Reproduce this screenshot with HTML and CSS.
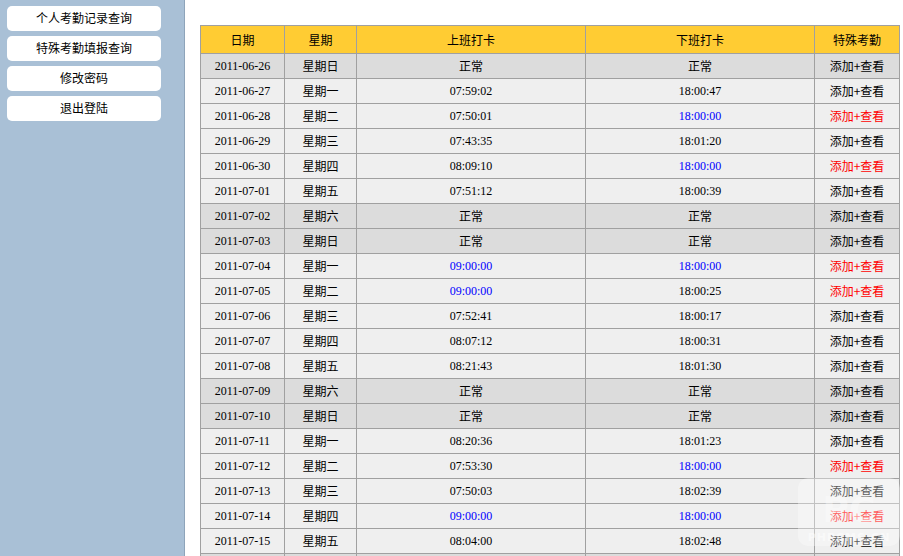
FILE: index.html
```html
<!DOCTYPE html>
<html lang="zh-CN">
<head>
<meta charset="utf-8">
<title>考勤记录</title>
<link rel="stylesheet" href="styles.css">
</head>
<body>
<div class="page">
  <aside class="sidebar">
    <a class="nav-btn" href="#">个人考勤记录查询</a>
    <a class="nav-btn" href="#">特殊考勤填报查询</a>
    <a class="nav-btn" href="#">修改密码</a>
    <a class="nav-btn" href="#">退出登陆</a>
  </aside>
  <main class="main">
    <table class="att">
      <colgroup>
        <col class="c-date"><col class="c-week"><col class="c-in"><col class="c-out"><col class="c-sp">
      </colgroup>
      <thead>
        <tr><th>日期</th><th>星期</th><th>上班打卡</th><th>下班打卡</th><th>特殊考勤</th></tr>
      </thead>
      <tbody>
        <tr class="off"><td>2011-06-26</td><td>星期日</td><td>正常</td><td>正常</td><td><a class="sp">添加+查看</a></td></tr>
        <tr><td>2011-06-27</td><td>星期一</td><td>07:59:02</td><td>18:00:47</td><td><a class="sp">添加+查看</a></td></tr>
        <tr><td>2011-06-28</td><td>星期二</td><td>07:50:01</td><td class="blue">18:00:00</td><td><a class="sp red">添加+查看</a></td></tr>
        <tr><td>2011-06-29</td><td>星期三</td><td>07:43:35</td><td>18:01:20</td><td><a class="sp">添加+查看</a></td></tr>
        <tr><td>2011-06-30</td><td>星期四</td><td>08:09:10</td><td class="blue">18:00:00</td><td><a class="sp red">添加+查看</a></td></tr>
        <tr><td>2011-07-01</td><td>星期五</td><td>07:51:12</td><td>18:00:39</td><td><a class="sp">添加+查看</a></td></tr>
        <tr class="off"><td>2011-07-02</td><td>星期六</td><td>正常</td><td>正常</td><td><a class="sp">添加+查看</a></td></tr>
        <tr class="off"><td>2011-07-03</td><td>星期日</td><td>正常</td><td>正常</td><td><a class="sp">添加+查看</a></td></tr>
        <tr><td>2011-07-04</td><td>星期一</td><td class="blue">09:00:00</td><td class="blue">18:00:00</td><td><a class="sp red">添加+查看</a></td></tr>
        <tr><td>2011-07-05</td><td>星期二</td><td class="blue">09:00:00</td><td>18:00:25</td><td><a class="sp red">添加+查看</a></td></tr>
        <tr><td>2011-07-06</td><td>星期三</td><td>07:52:41</td><td>18:00:17</td><td><a class="sp">添加+查看</a></td></tr>
        <tr><td>2011-07-07</td><td>星期四</td><td>08:07:12</td><td>18:00:31</td><td><a class="sp">添加+查看</a></td></tr>
        <tr><td>2011-07-08</td><td>星期五</td><td>08:21:43</td><td>18:01:30</td><td><a class="sp">添加+查看</a></td></tr>
        <tr class="off"><td>2011-07-09</td><td>星期六</td><td>正常</td><td>正常</td><td><a class="sp">添加+查看</a></td></tr>
        <tr class="off"><td>2011-07-10</td><td>星期日</td><td>正常</td><td>正常</td><td><a class="sp">添加+查看</a></td></tr>
        <tr><td>2011-07-11</td><td>星期一</td><td>08:20:36</td><td>18:01:23</td><td><a class="sp">添加+查看</a></td></tr>
        <tr><td>2011-07-12</td><td>星期二</td><td>07:53:30</td><td class="blue">18:00:00</td><td><a class="sp red">添加+查看</a></td></tr>
        <tr><td>2011-07-13</td><td>星期三</td><td>07:50:03</td><td>18:02:39</td><td><a class="sp">添加+查看</a></td></tr>
        <tr><td>2011-07-14</td><td>星期四</td><td class="blue">09:00:00</td><td class="blue">18:00:00</td><td><a class="sp red">添加+查看</a></td></tr>
        <tr><td>2011-07-15</td><td>星期五</td><td>08:04:00</td><td>18:02:48</td><td><a class="sp">添加+查看</a></td></tr>
        <tr class="off"><td>2011-07-16</td><td>星期六</td><td>正常</td><td>正常</td><td><a class="sp">添加+查看</a></td></tr>
      </tbody>
    </table>
  </main>
</div>
<div class="watermark"><span class="wm-mark">PC</span><span class="wm-text">PHPCMS.CN</span></div>
</body>
</html>
```

FILE: styles.css
```css
html, body {
  margin: 0;
  padding: 0;
  height: 100%;
  overflow: hidden;
}
body {
  font-family: "Liberation Serif", "Noto Sans CJK SC", serif;
  font-size: 12px;
  color: #000;
  background: #fff;
}
.page {
  display: flex;
  min-height: 100%;
}
.sidebar {
  width: 185px;
  flex: 0 0 185px;
  box-sizing: border-box;
  background: #a9c0d6;
  border-right: 1px solid #8ea4ba;
  display: flex;
  flex-direction: column;
  gap: 5px;
  padding: 6px 0 0 7px;
}
.nav-btn {
  display: block;
  width: 154px;
  height: 25px;
  line-height: 23px;
  background: #fff;
  border-radius: 5px;
  text-align: center;
  text-decoration: none;
  color: #000;
  font-family: "Noto Sans CJK SC", sans-serif;
  font-size: 12px;
}
.main {
  flex: 1;
  padding: 25px 0 0 15px;
}
.att {
  border-collapse: collapse;
  width: 699px;
  table-layout: fixed;
}
.c-date { width: 84px; }
.c-week { width: 72px; }
.c-in { width: 229px; }
.c-out { width: 229px; }
.c-sp { width: 85px; }
.att th, .att td {
  border: 1px solid #a0a0a0;
  text-align: center;
  padding: 0;
  white-space: nowrap;
}
.att th {
  background: #ffcc33;
  height: 27px;
  font-weight: normal;
  font-family: "Noto Sans CJK SC", sans-serif;
  font-size: 12px;
}
.att td {
  height: 24px;
  background: #efefef;
}
.att tr.off td {
  background: #dcdcdc;
}
.att td.blue {
  color: #0000ff;
}
.sp {
  color: #000;
  text-decoration: none;
  font-family: "Noto Sans CJK SC", sans-serif;
}
.sp.red {
  color: #ff0000;
}
.watermark {
  position: absolute;
  left: 798px;
  top: 478px;
  width: 102px;
  height: 68px;
  border-radius: 10px;
  background: rgba(255, 255, 255, 0.35);
  display: flex;
  flex-direction: column;
  align-items: center;
  justify-content: flex-end;
  pointer-events: none;
}
.wm-mark {
  font-family: "DejaVu Sans", sans-serif;
  font-weight: bold;
  font-size: 36px;
  line-height: 40px;
  color: rgba(255, 255, 255, 0.35);
}
.wm-text {
  font-family: "DejaVu Sans", sans-serif;
  font-weight: bold;
  font-size: 11px;
  line-height: 16px;
  color: rgba(255, 255, 255, 0.5);
  letter-spacing: 1px;
}
```
